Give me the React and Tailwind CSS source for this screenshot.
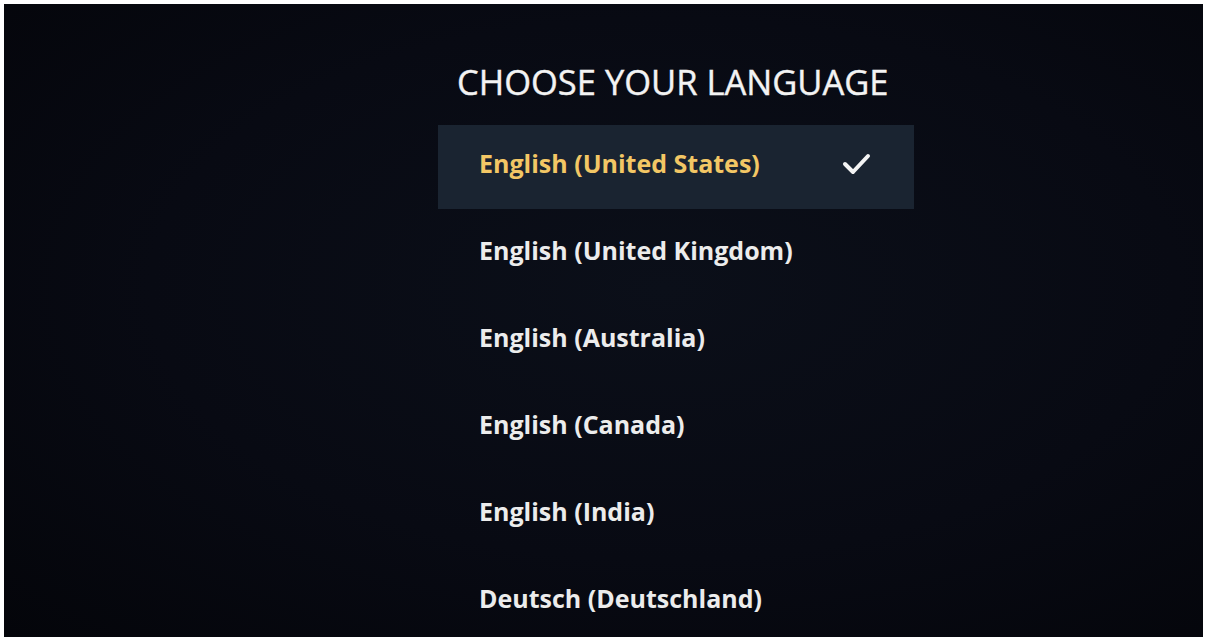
import React from "react";

const languages = [
  "English (United States)",
  "English (United Kingdom)",
  "English (Australia)",
  "English (Canada)",
  "English (India)",
  "Deutsch (Deutschland)",
];

function Check() {
  return (
    <svg width="30" height="24" viewBox="0 0 30 24" fill="none">
      <polyline
        points="3,13 11,21 26,5"
        stroke="#f4f4f4"
        strokeWidth="4"
        strokeLinecap="round"
        strokeLinejoin="round"
      />
    </svg>
  );
}

export default function App() {
  const selected = 0;

  return (
    <div className="w-full h-[642px] bg-white pt-[4px] pl-[4px] pr-[6px] pb-[5px] overflow-hidden">
      <div
        className="w-full h-full bg-[radial-gradient(ellipse_at_55%_45%,#0b0f19_0%,#080a13_55%,#04050a_100%)] overflow-hidden"
        style={{ fontFamily: '"Open Sans", "Liberation Sans", sans-serif' }}
      >
        <div className="ml-[434px] w-[476px] flex flex-col">
          <div className="h-[45px] mt-[56px] mb-[20px] pl-[19px] flex items-center">
            <h1 className="text-[34.5px] leading-none font-normal text-[#f3f3f3] [-webkit-text-stroke:0.4px_#f3f3f3]">
              CHOOSE YOUR LANGUAGE
            </h1>
          </div>

          <ul className="flex flex-col gap-[3px]">
            {languages.map((lang, i) => (
              <li
                key={lang}
                className={`h-[84px] pb-[8px] pl-[41px] pr-[42px] flex items-center justify-between ${
                  i === selected ? "bg-[#1a2431]" : ""
                }`}
              >
                <span
                  className={`text-[25px] font-bold leading-none ${
                    i === selected ? "text-[#f3c765]" : "text-[#ececec]"
                  }`}
                >
                  {lang}
                </span>
                {i === selected && <Check />}
              </li>
            ))}
          </ul>
        </div>
      </div>
    </div>
  );
}
